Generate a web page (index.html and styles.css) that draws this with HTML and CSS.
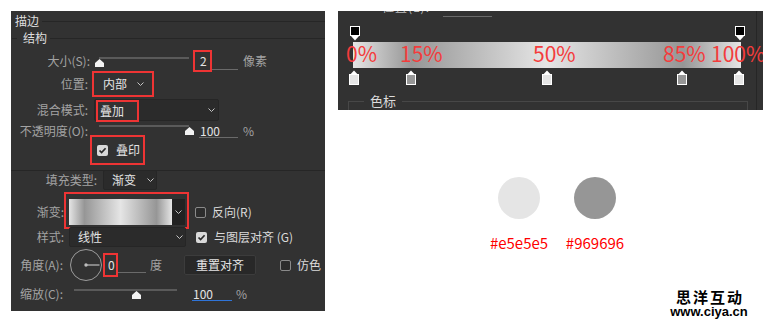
FILE: index.html
```html
<!DOCTYPE html>
<html lang="zh-CN">
<head>
<meta charset="utf-8">
<title>描边 · 渐变叠加</title>
<link rel="stylesheet" href="styles.css">
</head>
<body>
<div class="page">
  <section class="ps-panel">
    <div class="legend legend-top"><span class="legend-text">描边</span><span class="legend-line"></span></div>
    <div class="legend legend-sub"><span class="legend-stub"></span><span class="legend-text">结构</span><span class="legend-line"></span></div>

    <div class="row row-size">
      <span class="lbl w79">大小(S):</span>
      <span class="slider s-size"><svg class="thumb t-size" width="9" height="8" viewBox="0 0 9 8"><path d="M4.5 0 L9 4 V8 H0 V4 Z" fill="#f2f2f2"/></svg></span>
      <span class="field f-size"><span class="mark m-num">2</span></span>
      <span class="unit u-px">像素</span>
    </div>

    <div class="row row-pos">
      <span class="lbl w77">位置:</span>
      <span class="mark m-pos"><span class="val">内部</span><svg class="chev" width="7" height="4" viewBox="0 0 7 4"><path d="M0.5 0.5 L3.5 3.5 L6.5 0.5" fill="none" stroke="#c4c4c4"/></svg></span>
    </div>

    <div class="row row-blend">
      <span class="lbl w77">混合模式:</span>
      <span class="select s-blend"><span class="mark m-blend"><span class="val">叠加</span></span><svg class="chev" width="7" height="4" viewBox="0 0 7 4"><path d="M0.5 0.5 L3.5 3.5 L6.5 0.5" fill="none" stroke="#c4c4c4"/></svg></span>
    </div>

    <div class="row row-opacity">
      <span class="lbl w77">不透明度(O):</span>
      <span class="slider s-opacity"><svg class="thumb t-opacity" width="9" height="8" viewBox="0 0 9 8"><path d="M4.5 0 L9 4 V8 H0 V4 Z" fill="#f2f2f2"/></svg></span>
      <span class="field f-opacity"><span class="val">100</span></span>
      <span class="unit u-pct">%</span>
    </div>

    <div class="row row-overprint">
      <span class="mark m-over">
        <span class="cb on"><svg width="11" height="11" viewBox="0 0 11 11"><path d="M2.5 5.5 L4.6 7.6 L8.6 3.2" fill="none" stroke="#2a2a2a" stroke-width="1.7"/></svg></span>
        <span class="val over-txt">叠印</span>
      </span>
    </div>

    <div class="sep"></div>

    <div class="row row-fill">
      <span class="lbl w86">填充类型:</span>
      <span class="select s-fill"><span class="val">渐变</span><svg class="chev" width="7" height="4" viewBox="0 0 7 4"><path d="M0.5 0.5 L3.5 3.5 L6.5 0.5" fill="none" stroke="#c4c4c4"/></svg></span>
    </div>

    <div class="row row-grad">
      <span class="lbl w53">渐变:</span>
      <span class="mark m-grad">
        <span class="grad-swatch"></span>
        <span class="grad-drop"><svg class="chev" width="7" height="4" viewBox="0 0 7 4"><path d="M0.5 0.5 L3.5 3.5 L6.5 0.5" fill="none" stroke="#c4c4c4"/></svg></span>
      </span>
      <span class="cb off cb-rev"></span>
      <span class="opt">反向(R)</span>
    </div>

    <div class="row row-style">
      <span class="lbl w53">样式:</span>
      <span class="select s-style"><span class="val">线性</span><svg class="chev" width="7" height="4" viewBox="0 0 7 4"><path d="M0.5 0.5 L3.5 3.5 L6.5 0.5" fill="none" stroke="#c4c4c4"/></svg></span>
      <span class="cb on cb-align"><svg width="11" height="11" viewBox="0 0 11 11"><path d="M2.5 5.5 L4.6 7.6 L8.6 3.2" fill="none" stroke="#2a2a2a" stroke-width="1.7"/></svg></span>
      <span class="opt">与图层对齐 (G)</span>
    </div>

    <div class="row row-angle">
      <span class="lbl w52">角度(A):</span>
      <svg class="dial" width="32" height="32" viewBox="0 0 32 32"><circle cx="16" cy="16" r="15.5" fill="none" stroke="#9c9c9c"/><line x1="16" y1="16" x2="29.5" y2="16" stroke="#bdbdbd" stroke-width="1.2"/><circle cx="16" cy="16" r="1.7" fill="#bdbdbd"/></svg>
      <span class="field f-angle"><span class="mark m-angle">0</span></span>
      <span class="unit u-deg">度</span>
      <span class="btn">重置对齐</span>
      <span class="cb off cb-dither"></span>
      <span class="opt">仿色</span>
    </div>

    <div class="row row-scale">
      <span class="lbl w52">缩放(C):</span>
      <span class="slider s-scale"><svg class="thumb t-scale" width="9" height="8" viewBox="0 0 9 8"><path d="M4.5 0 L9 4 V8 H0 V4 Z" fill="#f2f2f2"/></svg></span>
      <span class="field f-scale"><span class="val">100</span></span>
      <span class="unit u-pct2">%</span>
    </div>
  </section>

  <div class="right-col">
    <section class="ge">
      <div class="ge-main">
        <div class="ge-top"><span class="ge-cut">位置(L):</span><span class="ge-cut-line"></span></div>
        <div class="ge-track">
          <svg class="stop top" style="left:0.5%" width="10" height="15" viewBox="0 0 10 15"><rect x="0.5" y="0.5" width="9" height="9" fill="#000" stroke="#fff"/><path d="M1 10 H9 L5 14.5 Z" fill="#fff"/></svg>
          <svg class="stop top" style="left:99.7%" width="10" height="15" viewBox="0 0 10 15"><rect x="0.5" y="0.5" width="9" height="9" fill="#000" stroke="#fff"/><path d="M1 10 H9 L5 14.5 Z" fill="#fff"/></svg>
          <div class="ge-bar"></div>
          <svg class="stop bottom" style="left:0.3%" width="10" height="15" viewBox="0 0 10 15"><path d="M5 0.5 L9 4.8 H1 Z" fill="#fff"/><rect x="0.5" y="4.5" width="9" height="10" fill="#e5e5e5" stroke="#fff"/></svg>
          <svg class="stop bottom" style="left:15%" width="10" height="15" viewBox="0 0 10 15"><path d="M5 0.5 L9 4.8 H1 Z" fill="#fff"/><rect x="0.5" y="4.5" width="9" height="10" fill="#969696" stroke="#fff"/></svg>
          <svg class="stop bottom" style="left:50%" width="10" height="15" viewBox="0 0 10 15"><path d="M5 0.5 L9 4.8 H1 Z" fill="#fff"/><rect x="0.5" y="4.5" width="9" height="10" fill="#e5e5e5" stroke="#fff"/></svg>
          <svg class="stop bottom" style="left:84.8%" width="10" height="15" viewBox="0 0 10 15"><path d="M5 0.5 L9 4.8 H1 Z" fill="#fff"/><rect x="0.5" y="4.5" width="9" height="10" fill="#969696" stroke="#fff"/></svg>
          <svg class="stop bottom" style="left:99.5%" width="10" height="15" viewBox="0 0 10 15"><path d="M5 0.5 L9 4.8 H1 Z" fill="#fff"/><rect x="0.5" y="4.5" width="9" height="10" fill="#e5e5e5" stroke="#fff"/></svg>
          <span class="pct p0">0%</span>
          <span class="pct p15">15%</span>
          <span class="pct p50">50%</span>
          <span class="pct p85">85%</span>
          <span class="pct p100">100%</span>
        </div>
        <fieldset class="ge-set"><legend>色标</legend></fieldset>
      </div>
      <span class="ge-vline"></span>
    </section>

    <div class="swatches">
      <div class="sw"><span class="dot light"></span><span class="hex">#e5e5e5</span></div>
      <div class="sw"><span class="dot dark"></span><span class="hex">#969696</span></div>
    </div>

    <div class="watermark">
      <span class="wm-cn">思洋互动</span>
      <span class="wm-en">www.ciya.cn</span>
    </div>
  </div>
</div>
</body>
</html>
```

FILE: styles.css
```css
* { box-sizing: border-box; }
html, body { margin: 0; padding: 0; }
body {
  background: #ffffff;
  width: 778px;
  height: 327px;
  overflow: hidden;
  font-family: "Noto Sans CJK SC", "Noto Sans", sans-serif;
}
.page {
  display: flex;
  align-items: flex-start;
  padding: 11px 0 0 11px;
}

/* ---------- left Photoshop panel ---------- */
.ps-panel {
  flex: none;
  width: 314px;
  height: 300px;
  background: #323232;
  color: #a3a3a3;
  font-size: 12px;
  line-height: 14px;
  display: flex;
  flex-direction: column;
  overflow: hidden;
}
.legend { display: flex; align-items: center; color: #dedede; flex: none; }
.legend-top { height: 20px; padding-left: 4px; }
.legend-sub { height: 14px; }
.legend-stub { width: 5px; height: 1px; background: #262626; margin-left: 1px; margin-right: 6px; }
.legend-line { flex: 1; height: 1px; background: #262626; margin-left: 3px; }

.row { display: flex; align-items: center; flex: none; }
.lbl { flex: none; text-align: right; white-space: nowrap; }
.w79 { width: 79px; }
.w77 { width: 77px; }
.w86 { width: 86px; }
.w53 { width: 53px; }
.w52 { width: 52px; }
.val { color: #e4e4e4; white-space: nowrap; }
.opt { color: #dadada; white-space: nowrap; margin-left: 6px; }
.unit { color: #a3a3a3; white-space: nowrap; }

.mark {
  flex: none;
  display: flex;
  align-items: center;
  border: 2px solid #ee3434;
  background: #323232;
}

.slider {
  flex: none;
  position: relative;
  height: 12px;
  align-self: flex-start;
}
.slider::before {
  content: "";
  position: absolute;
  left: 0;
  right: 0;
  top: 0;
  height: 2px;
  background: #5a5a5a;
}
.thumb { position: absolute; top: 2px; }

.field {
  flex: none;
  display: flex;
  align-items: center;
  border-bottom: 1px solid #6a6a6a;
}

.select {
  flex: none;
  display: flex;
  align-items: center;
  background: #2b2b2b;
  border: 1px solid #262626;
  border-radius: 2px;
}
.chev { flex: none; margin-left: auto; }

.cb {
  flex: none;
  width: 11px;
  height: 11px;
  border-radius: 2px;
  display: block;
}
.cb svg { display: block; }
.cb.on { background: #d9d9d9; }
.cb.off { border: 1px solid #8a8a8a; background: #2c2c2c; }

/* size */
.row-size { height: 24px; margin-top: 4px; }
.s-size { width: 90px; margin-left: 9px; margin-top: 8px; }
.t-size { left: -4px; }
.f-size { width: 45px; height: 18px; margin-left: 4px; }
.m-num { width: 19px; height: 22px; padding-left: 5px; color: #e4e4e4; }
.u-px { margin-left: 5px; }

/* position */
.row-pos { height: 22px; }
.m-pos { width: 62px; height: 26px; margin-left: 4px; padding-left: 9px; }
.m-pos .chev { margin-right: 8px; }

/* blend */
.row-blend { height: 22px; margin-top: 4px; }
.s-blend { width: 125px; height: 22px; margin-left: 6px; }
.m-blend { width: 43px; height: 22px; margin-left: 1px; margin-top: 2px; padding-left: 2px; }
.s-blend .chev { margin-right: 3px; }

/* opacity */
.row-opacity { height: 20px; }
.s-opacity { width: 90px; margin-left: 11px; margin-top: 4px; }
.t-opacity { left: 86px; }
.f-opacity { width: 39px; height: 14px; margin-left: 10px; padding-left: 1px; }
.u-pct { margin-left: 5px; }

/* overprint */
.row-overprint { height: 18px; }
.m-over { width: 55px; height: 30px; margin-left: 79px; padding-left: 5px; }
.over-txt { margin-left: 8px; }

.sep { flex: none; height: 1px; background: #262626; margin-top: 11px; }

/* fill type */
.row-fill { height: 18px; }
.s-fill { width: 54px; height: 20px; margin-left: 6px; padding-left: 8px; }
.s-fill .chev { margin-right: 2px; }

/* gradient */
.row-grad { height: 26px; margin-top: 10px; }
.m-grad { width: 125px; padding: 5px 2px 2px 3px; margin-bottom: 3px; }
.grad-swatch {
  flex: none;
  width: 103px;
  height: 26px;
  background: linear-gradient(to right, #e5e5e5 0%, #969696 15%, #e5e5e5 50%, #969696 85%, #e5e5e5 100%);
}
.grad-drop {
  flex: none;
  width: 13px;
  height: 26px;
  background: #222222;
  display: flex;
  align-items: center;
  justify-content: center;
}
.grad-drop .chev { margin: 0; }
.cb-rev { margin-left: 6px; }

/* style */
.row-style { height: 20px; margin-top: 2px; }
.s-style { width: 117px; height: 20px; margin-left: 5px; padding-left: 8px; }
.s-style .chev { margin-right: 2px; }
.cb-align { margin-left: 10px; }
.row-style .opt { margin-left: 7px; }

/* angle */
.row-angle { height: 32px; margin-top: 2px; }
.dial { flex: none; margin-left: 7px; display: block; }
.f-angle { width: 43px; height: 16px; margin-left: 1px; }
.m-angle { width: 15px; height: 24px; padding-left: 3px; color: #e4e4e4; }
.u-deg { margin-left: 4px; }
.btn {
  flex: none;
  width: 72px;
  height: 20px;
  margin-left: 22px;
  background: #282828;
  border: 1px solid #3c3c3c;
  border-radius: 2px;
  color: #e4e4e4;
  display: flex;
  align-items: center;
  justify-content: center;
}
.cb-dither { margin-left: 24px; }

/* scale */
.row-scale { height: 20px; margin-top: 3px; }
.s-scale { width: 103px; margin-left: 11px; margin-top: 5px; }
.t-scale { left: 58px; }
.f-scale { width: 40px; height: 14px; margin-left: 15px; padding-left: 1px; border-bottom-color: #2f74d8; }
.u-pct2 { margin-left: 4px; }

/* ---------- right column ---------- */
.right-col {
  flex: none;
  width: 425px;
  margin-left: 13px;
  display: flex;
  flex-direction: column;
}
.ge {
  height: 99px;
  background: #323232;
  display: flex;
  overflow: hidden;
}
.ge-main { width: 418px; flex: none; display: flex; flex-direction: column; }
.ge-vline { flex: none; width: 1px; background: #262626; }

.ge-top { display: flex; align-items: flex-start; height: 6px; flex: none; }
.ge-cut {
  width: 61px;
  margin-left: 44px;
  margin-top: -10px;
  font-size: 12px;
  line-height: 12px;
  color: #bdbdbd;
  letter-spacing: 1px;
  white-space: nowrap;
}
.ge-cut-line { width: 49px; height: 1px; background: #6a6a6a; margin-top: 5px; }

.ge-track {
  position: relative;
  flex: none;
  width: 388px;
  height: 59px;
  margin: 9px 0 0 15px;
}
.ge-bar {
  position: absolute;
  left: 0;
  right: 0;
  top: 16px;
  height: 26px;
  background: linear-gradient(to right, #e5e5e5 0%, #969696 15%, #e5e5e5 50%, #969696 85%, #e5e5e5 100%);
}
.stop { position: absolute; transform: translateX(-50%); display: block; }
.stop.top { top: 0; }
.stop.bottom { top: 44px; }

.pct {
  position: absolute;
  top: 17px;
  font-size: 21px;
  line-height: 21px;
  color: #f43c3c;
  white-space: nowrap;
}
.p0 { left: -7px; }
.p15 { left: 47px; }
.p50 { left: 180px; }
.p85 { left: 310px; }
.p100 { left: 358px; }

.ge-set {
  flex: none;
  margin: 7px 0 0 10px;
  padding: 0;
  width: 400px;
  height: 40px;
  border: 1px solid #474747;
}
.ge-set legend {
  margin-left: 15px;
  padding: 0 6px;
  font-size: 13px;
  line-height: 18px;
  color: #dcdcdc;
}

.swatches {
  display: flex;
  gap: 16px;
  padding-left: 151px;
  margin-top: 67px;
}
.sw { width: 60px; display: flex; flex-direction: column; align-items: center; }
.dot { width: 42px; height: 42px; border-radius: 50%; display: block; }
.dot.light { background: #e5e5e5; }
.dot.dark { background: #969696; }
.hex {
  margin-top: 15px;
  font-size: 15px;
  line-height: 18px;
  color: #ff0000;
}

.watermark {
  width: 90px;
  margin-left: 326px;
  margin-top: 38px;
  display: flex;
  flex-direction: column;
  align-items: center;
  color: #000;
  font-weight: bold;
}
.wm-cn {
  font-size: 15px;
  line-height: 14px;
  letter-spacing: 2px;
  padding-left: 2px;
}
.wm-en {
  margin-top: 2px;
  font-family: "Liberation Sans", Arial, sans-serif;
  font-size: 13px;
  line-height: 11px;
}
```
